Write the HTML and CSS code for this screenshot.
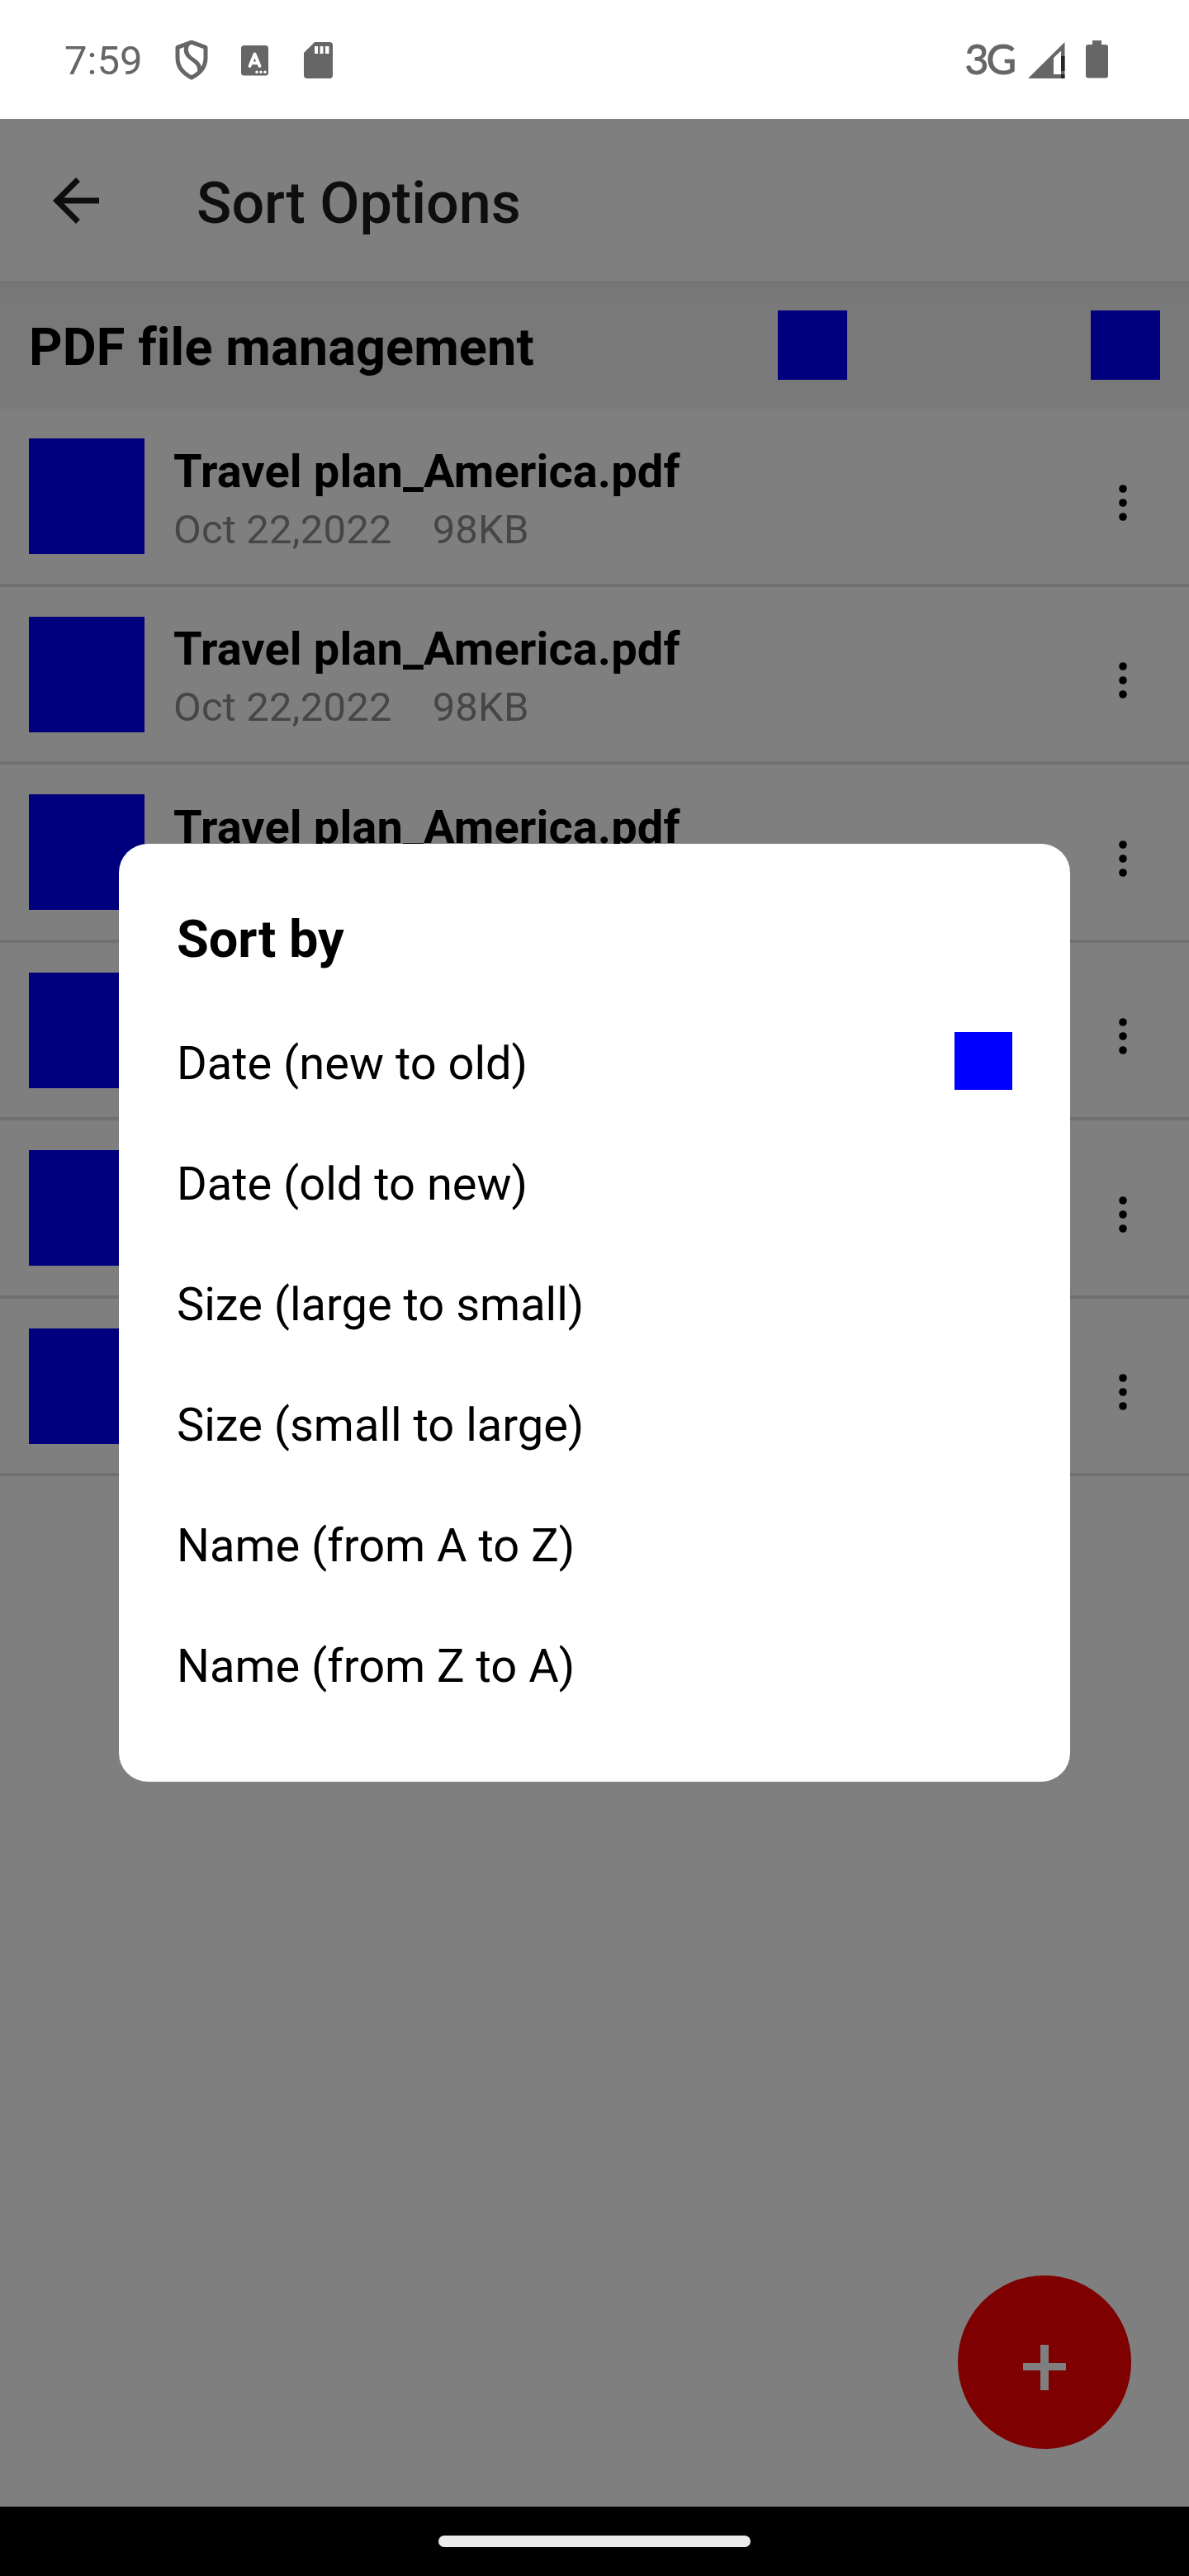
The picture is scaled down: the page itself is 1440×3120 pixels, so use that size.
FILE: index.html
```html
<!DOCTYPE html>
<html lang="en">
<head>
<meta charset="utf-8">
<title>Sort Options</title>
<link rel="stylesheet" href="styles.css">
</head>
<body>
<div class="screen">
  <header class="status">
    <span class="clock">7:59</span>
    <svg class="shield" width="40" height="50" viewBox="0 0 40 50" fill="none" stroke="#666" stroke-width="5" stroke-linejoin="round"><path d="M20 3.200 3 9.300V22c0 11 7 19 17 24 10-5 17-13 17-24V9.300z"/><path d="M15.500 5C12 11 13 17 18 21.500S31 29 29.500 38"/></svg>
    <svg class="letter" width="33" height="37" viewBox="0 0 33 37"><rect width="33" height="36.500" rx="3.500" fill="#666"/><path d="M10.500 25 16.500 10.500 22.500 25M12.500 21.300h8" fill="none" stroke="#fff" stroke-width="3.800" stroke-linecap="round" stroke-linejoin="round"/><g fill="#fff"><circle cx="19" cy="32.300" r="1.700"/><circle cx="24" cy="32.300" r="1.700"/><circle cx="29" cy="32.300" r="1.700"/></g></svg>
    <svg class="card" width="35" height="44" viewBox="0 0 35 44"><path fill="#666" d="M13 0h18a4 4 0 0 1 4 4v36a4 4 0 0 1-4 4H4a4 4 0 0 1-4-4V13z"/><path fill="#fff" d="M13 5h4v9h-4zM19.500 5h4v9h-4zM26 5h4.500v9H26z"/></svg>
    <span class="network">3G</span>
    <svg class="signal" width="45" height="44" viewBox="0 0 45 44"><path fill="#666" fill-rule="evenodd" d="M0 44 44.500 0v44zM31 19v20h9V10.500z"/><path fill="#262626" d="M40 17h4.500v18H40zM40 39h4.500v5H40z"/></svg>
    <svg class="battery" width="27" height="46" viewBox="0 0 27 46"><path fill="#666" d="M8 0h11v5h5a3 3 0 0 1 3 3v34.500a3 3 0 0 1-3 3H3a3 3 0 0 1-3-3V8a3 3 0 0 1 3-3h5z"/></svg>
  </header>

  <div class="appbar">
    <svg class="back" width="84" height="84" viewBox="0 0 24 24"><path fill="#0e0e0e" d="M20 11H7.830l5.590-5.590L12 4l-8 8 8 8 1.410-1.410L7.830 13H20v-2z"/></svg>
    <h1 class="title">Sort Options</h1>
  </div>

  <div class="toolbar">
    <h2 class="heading">PDF file management</h2>
    <div class="action"></div>
    <div class="action"></div>
  </div>

  <main class="files">
    <div class="file"><div class="thumb"></div><div class="info"><div class="name">Travel plan_America.pdf</div><div class="meta"><span>Oct 22,2022</span><span>98KB</span></div></div><svg class="more" width="10" height="44" viewBox="0 0 10 44"><circle cx="5" cy="5" r="4.800"/><circle cx="5" cy="22" r="4.800"/><circle cx="5" cy="39" r="4.800"/></svg></div>
    <div class="divider"></div>
    <div class="file"><div class="thumb"></div><div class="info"><div class="name">Travel plan_America.pdf</div><div class="meta"><span>Oct 22,2022</span><span>98KB</span></div></div><svg class="more" width="10" height="44" viewBox="0 0 10 44"><circle cx="5" cy="5" r="4.800"/><circle cx="5" cy="22" r="4.800"/><circle cx="5" cy="39" r="4.800"/></svg></div>
    <div class="divider"></div>
    <div class="file"><div class="thumb"></div><div class="info"><div class="name">Travel plan_America.pdf</div></div><svg class="more" width="10" height="44" viewBox="0 0 10 44"><circle cx="5" cy="5" r="4.800"/><circle cx="5" cy="22" r="4.800"/><circle cx="5" cy="39" r="4.800"/></svg></div>
    <div class="divider"></div>
    <div class="file"><div class="thumb"></div><div class="info"></div><svg class="more" width="10" height="44" viewBox="0 0 10 44"><circle cx="5" cy="5" r="4.800"/><circle cx="5" cy="22" r="4.800"/><circle cx="5" cy="39" r="4.800"/></svg></div>
    <div class="divider"></div>
    <div class="file"><div class="thumb"></div><div class="info"></div><svg class="more" width="10" height="44" viewBox="0 0 10 44"><circle cx="5" cy="5" r="4.800"/><circle cx="5" cy="22" r="4.800"/><circle cx="5" cy="39" r="4.800"/></svg></div>
    <div class="divider"></div>
    <div class="file"><div class="thumb"></div><div class="info"></div><svg class="more" width="10" height="44" viewBox="0 0 10 44"><circle cx="5" cy="5" r="4.800"/><circle cx="5" cy="22" r="4.800"/><circle cx="5" cy="39" r="4.800"/></svg></div>
    <div class="divider"></div>
  </main>

  <footer class="nav"><div class="handle"></div></footer>

  <div class="fab"><svg width="52" height="55" viewBox="0 0 52 55"><path fill="#7f7f7f" d="M21 0h10v22h21v9H31v24H21V31H0v-9h21z"/></svg></div>

  <section class="dialog">
    <h2 class="dialog-title">Sort by</h2>
    <div class="option"><span>Date (new to old)</span><div class="selected"></div></div>
    <div class="option"><span>Date (old to new)</span></div>
    <div class="option"><span>Size (large to small)</span></div>
    <div class="option"><span>Size (small to large)</span></div>
    <div class="option"><span>Name (from A to Z)</span></div>
    <div class="option"><span>Name (from Z to A)</span></div>
  </section>
</div>
</body>
</html>
```
FILE: styles.css
```css
* { box-sizing: border-box; }
body { margin: 0; font-family: Roboto, "Liberation Sans", sans-serif; color: #000; }
h1, h2 { margin: 0; }
svg { display: block; flex: none; }

.screen { position: relative; display: flex; flex-direction: column; width: 1440px; height: 3120px; background: #7f7f7f; overflow: hidden; }

/* System status bar */
.status { display: flex; align-items: flex-start; height: 144px; padding: 0 98px 0 78px; background: #fff; color: #666; }
.clock { width: 134px; padding-top: 45px; font-size: 49px; line-height: 58px; }
.shield { margin-top: 48px; }
.letter { margin: 55px 0 0 40px; }
.card { margin: 51px 0 0 43px; }
.network { margin-left: auto; padding: 41px 17px 0 0; font-family: Lato, sans-serif; font-size: 50px; letter-spacing: -3px; line-height: 61px; -webkit-text-stroke: 1px #666; }
.signal { margin-top: 51px; }
.battery { margin: 49px 0 0 25px; }

/* App bar */
.appbar { display: flex; align-items: flex-start; height: 196px; padding-left: 50px; }
.back { margin-top: 57px; }
.title { margin-left: 104px; padding-top: 4px; color: #0e0e0e; font-size: 70px; font-weight: 500; line-height: 196px; }

.toolbar { display: flex; align-items: flex-start; height: 155.200px; padding: 0 35px; background: linear-gradient(#757575, #797979 26px, #797979); }
.heading { flex: 1; font-size: 63px; font-weight: 700; letter-spacing: 0.100px; line-height: 161px; }
.action { width: 84px; height: 84px; margin-top: 36px; background: #00007f; }
.action + .action { margin-left: 295px; }

/* File list */
.files { flex: 1; }
.file { display: flex; align-items: flex-start; height: 211.500px; padding: 0 75px 0 35px; }
.thumb { width: 140px; height: 140px; margin-top: 35.900px; background: #00007f; }
.info { flex: 1; padding: 40.500px 0 0 35px; }
.name { font-size: 56px; font-weight: 700; letter-spacing: 0.120px; line-height: 70px; }
.meta { display: flex; gap: 49px; color: #464646; font-size: 49px; letter-spacing: 0.200px; line-height: 71px; }
.more { margin-top: 91.800px; }
.divider { height: 4px; background: #707070; }

/* Gesture bar */
.nav { display: flex; justify-content: center; height: 84px; padding-top: 35px; background: #000; }
.handle { width: 378px; height: 14px; border-radius: 7px; background: #ebebeb; }

.fab { position: absolute; left: 1160px; top: 2756px; display: flex; align-items: flex-start; justify-content: center; width: 210px; height: 210px; padding-top: 84px; border-radius: 50%; background: #7f0000; }

/* Sort dialog */
.dialog { position: absolute; left: 144px; top: 1022px; width: 1152px; height: 1136px; padding: 80px 70px 0; border-radius: 35px; background: #fff; }
.dialog-title { margin-bottom: 39px; font-size: 63px; font-weight: 700; line-height: 71px; }
.option { display: flex; align-items: center; justify-content: space-between; height: 146px; font-size: 56px; }
.option span { padding-top: 6px; line-height: 70px; }
.selected { width: 70px; height: 70px; background: #00f; }
```
